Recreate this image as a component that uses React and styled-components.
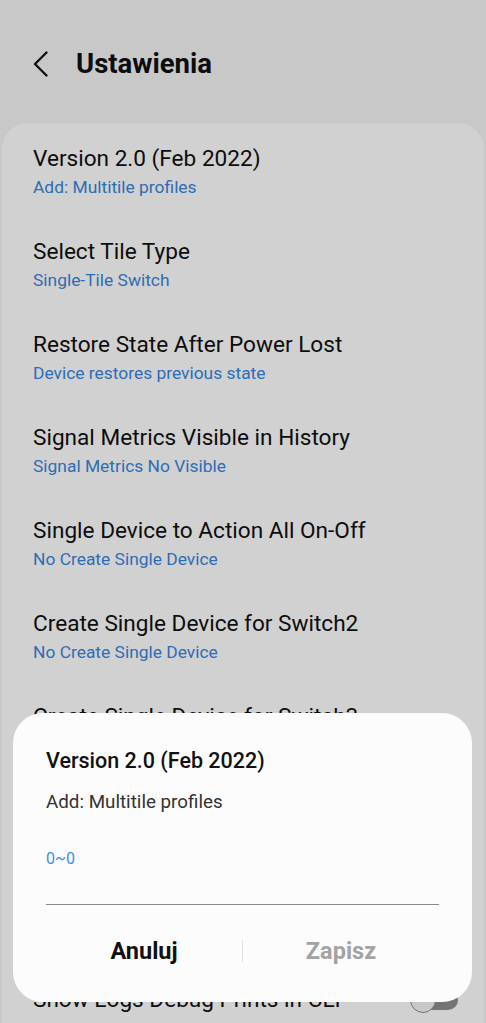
import React from "react";
import styled, { createGlobalStyle } from "styled-components";

const Global = createGlobalStyle`
  html, body { margin: 0; padding: 0; background: #f4f4f4; }
  body { font-family: Roboto, "Noto Sans", "Liberation Sans", sans-serif; -webkit-font-smoothing: antialiased; }
  * { box-sizing: border-box; }
`;

const Page = styled.div`
  min-height: 1023px;
  background: #f4f4f4;
  overflow: hidden;
`;

const Header = styled.header`
  height: 123px;
  display: flex;
  align-items: center;
  padding: 4px 0 0 32px;
  gap: 26px;
`;

const BackBtn = styled.button`
  border: 0;
  background: none;
  padding: 0;
  width: 18px;
  height: 28px;
  display: flex;
  align-items: center;
  justify-content: center;
  color: #111;
`;

const Title = styled.h1`
  margin: 0;
  font-size: 27.5px;
  font-weight: 700;
  color: #111;
`;

const Card = styled.section`
  margin: 0 2px;
  background: #ffffff;
  border-radius: 26px 26px 0 0;
  padding-top: 3px;
  min-height: 920px;
`;

const Item = styled.div`
  padding: 18px 31px 19px;
  display: flex;
  align-items: center;
  justify-content: space-between;
  min-height: ${(p) => (p.$single ? "74px" : "auto")};
`;

const ItemText = styled.div`
  display: flex;
  flex-direction: column;
`;

const ItemTitle = styled.div`
  font-size: 22.6px;
  line-height: 30px;
  color: #111;
`;

const ItemSub = styled.div`
  font-size: 17.4px;
  line-height: 26px;
  color: #3986de;
`;

const Switch = styled.div`
  position: relative;
  width: 48px;
  height: 26px;
  flex: none;
  margin-right: -5px;
`;

const Track = styled.div`
  position: absolute;
  left: 4px;
  right: 0;
  top: 3px;
  height: 20px;
  border-radius: 10px;
  background: #8e8e8e;
`;

const Knob = styled.div`
  position: absolute;
  left: 0;
  top: 0;
  width: 26px;
  height: 26px;
  border-radius: 50%;
  background: #f4f4f4;
  border: 1.5px solid #8e8e8e;
`;

const Scrim = styled.div`
  position: fixed;
  inset: 0;
  background: rgba(0, 0, 0, 0.18);
`;

const Dialog = styled.div`
  position: fixed;
  left: 13px;
  right: 14px;
  bottom: 21px;
  background: #fcfcfc;
  border-radius: 30px;
  padding: 34px 33px 23px;
  display: flex;
  flex-direction: column;
`;

const DialogTitle = styled.div`
  font-size: 21.5px;
  line-height: 28px;
  font-weight: 500;
  color: #111;
`;

const DialogDesc = styled.div`
  margin-top: 14px;
  font-size: 18.8px;
  line-height: 26px;
  color: #333;
`;

const Field = styled.div`
  margin-top: 34px;
  padding-bottom: 35px;
  border-bottom: 1.5px solid #8a8a8a;
  font-size: 16px;
  line-height: 20px;
  color: #3d8ee0;
`;

const Actions = styled.div`
  margin-top: 18px;
  height: 56px;
  display: flex;
  align-items: center;
`;

const ActionBtn = styled.button`
  flex: 1;
  border: 0;
  background: none;
  font-family: inherit;
  font-size: 23.5px;
  font-weight: 700;
  color: ${(p) => (p.$disabled ? "#a3a3a3" : "#111")};
  padding: 0;
  height: 100%;
`;

const Divider = styled.div`
  width: 1px;
  height: 22px;
  background: #e2e2e2;
`;

const items = [
  ["Version 2.0 (Feb 2022)", "Add: Multitile profiles"],
  ["Select Tile Type", "Single-Tile Switch"],
  ["Restore State After Power Lost", "Device restores previous state"],
  ["Signal Metrics Visible in History", "Signal Metrics No Visible"],
  ["Single Device to Action All On-Off", "No Create Single Device"],
  ["Create Single Device for Switch2", "No Create Single Device"],
  ["Create Single Device for Switch3", "No Create Single Device"],
  ["Create Single Device for Switch4", "No Create Single Device"],
  ["Create Single Device for Switch5", "No Create Single Device"],
];

export default function App() {
  return (
    <Page>
      <Global />
      <Header>
        <BackBtn aria-label="Back">
          <svg width="16" height="26" viewBox="0 0 16 26" fill="none">
            <path d="M13.5 1.5 L2 13 L13.5 24.5" stroke="#111" strokeWidth="2.3" strokeLinecap="round" strokeLinejoin="round" />
          </svg>
        </BackBtn>
        <Title>Ustawienia</Title>
      </Header>
      <Card>
        {items.map(([t, s]) => (
          <Item key={t}>
            <ItemText>
              <ItemTitle>{t}</ItemTitle>
              <ItemSub>{s}</ItemSub>
            </ItemText>
          </Item>
        ))}
        <Item $single>
          <ItemText>
            <ItemTitle>Show Logs Debug Prints in CLI</ItemTitle>
          </ItemText>
          <Switch>
            <Track />
            <Knob />
          </Switch>
        </Item>
      </Card>
      <Scrim />
      <Dialog>
        <DialogTitle>Version 2.0 (Feb 2022)</DialogTitle>
        <DialogDesc>Add: Multitile profiles</DialogDesc>
        <Field>0~0</Field>
        <Actions>
          <ActionBtn>Anuluj</ActionBtn>
          <Divider />
          <ActionBtn $disabled>Zapisz</ActionBtn>
        </Actions>
      </Dialog>
    </Page>
  );
}
